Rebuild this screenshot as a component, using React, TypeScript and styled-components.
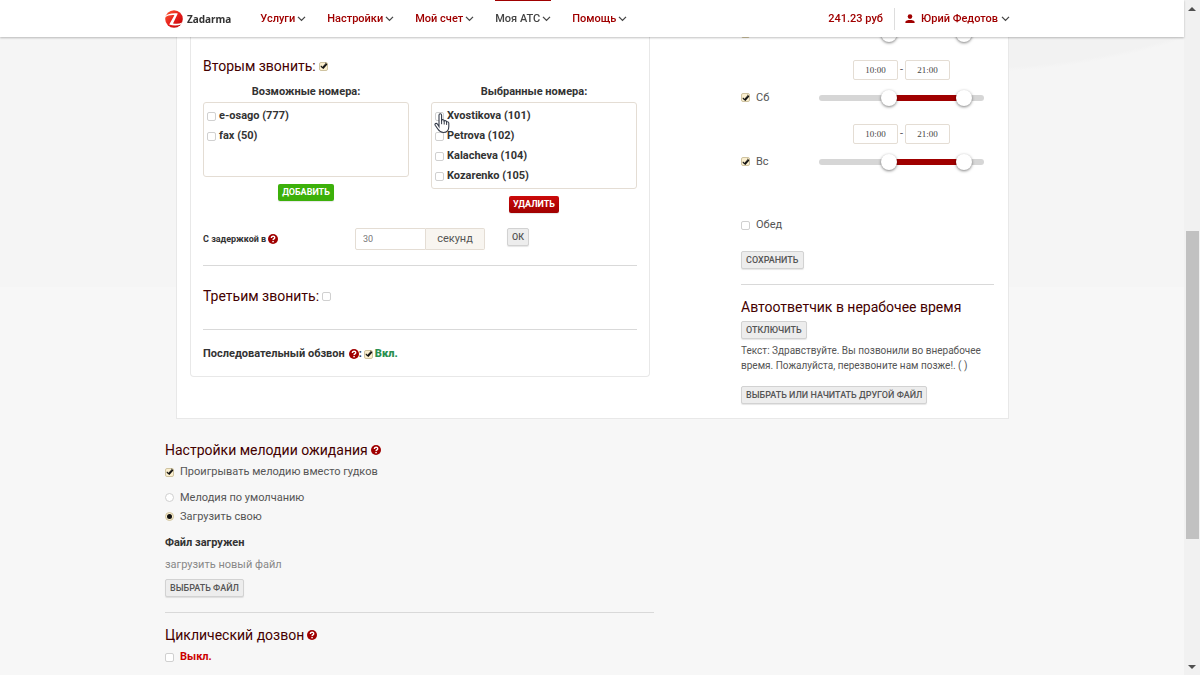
import React from 'react';
import styled, { createGlobalStyle, css } from 'styled-components';

const GlobalStyle = createGlobalStyle`
  *, *::before, *::after { box-sizing: border-box; }
  body {
    margin: 0;
    background: #f7f7f7;
    color: #555;
    font: 11px/20px Roboto, "Liberation Sans", sans-serif;
  }
  button, input { font-family: inherit; }
`;

const red = '#a00000';

const Page = styled.div`
  display: flex;
  align-items: flex-start;
  min-height: 100vh;
`;

const Content = styled.div`
  flex: 1;
  min-width: 0;
  min-height: 100vh;
  background:
    radial-gradient(ellipse 536px 400px at 82% -328px, #f2f2f2 99%, transparent 100%) no-repeat,
    linear-gradient(#f5f5f5, #f5f5f5) no-repeat top / 100% 287px;
`;

const Container = styled.div`
  max-width: 854px;
  margin: 0 auto;
`;

/* ---------- header ---------- */

const Header = styled.header`
  position: fixed;
  z-index: 2;
  top: 0;
  left: 0;
  right: 16px;
  background: #fff;
  box-shadow: 0 1px 2px rgba(0, 0, 0, 0.25);
`;

const HeaderRow = styled(Container)`
  display: flex;
  height: 37px;
  padding-right: 9px;
`;

const Logo = styled.a`
  display: flex;
  align-items: center;
  gap: 4px;
  margin-right: 29px;
  color: #333;
  font: 700 10px/20px "Noto Sans", "Open Sans", sans-serif;
  text-decoration: none;
`;

const Nav = styled.nav`
  display: flex;
  gap: 21px;
  margin-right: auto;
`;

const MenuLink = styled.a<{ $active?: boolean }>`
  display: flex;
  align-items: center;
  gap: 2px;
  border-top: 1px solid ${(p) => (p.$active ? red : 'transparent')};
  color: ${(p) => (p.$active ? '#444' : red)};
  font-size: 11px;
  font-weight: 500;
  text-decoration: none;
  white-space: nowrap;
`;

const Balance = styled(MenuLink)`
  margin-right: 11px;
`;

const HeaderRule = styled.span`
  align-self: center;
  width: 1px;
  height: 22px;
  margin-right: 10px;
  background: #ddd;
`;

const UserName = styled.span`
  margin: 0 1px 0 4px;
`;

/* ---------- shared parts ---------- */

const Title = styled.h2`
  display: flex;
  align-items: center;
  gap: 3px;
  margin: 0;
  color: #400;
  font-size: 14px;
  font-weight: 400;
  line-height: 20px;
`;

const Rule = styled.hr`
  height: 1px;
  margin: 0;
  border: 0;
  background: #d9d9d9;
`;

const boxed = css`
  appearance: none;
  display: grid;
  place-items: center;
  flex: none;
  width: 9px;
  height: 9px;
  margin: 0;
  border: 1px solid #d0d0d0;
  background: #fff;
  &:checked {
    border-color: #cfc3a0;
    background: #fbefcf;
  }
`;

const Check = styled.input.attrs({ type: 'checkbox' })`
  ${boxed}
  border-radius: 2px;
  &:checked::after {
    content: '';
    width: 3px;
    height: 6px;
    margin-top: -2px;
    border: solid #111;
    border-width: 0 1px 1px 0;
    box-shadow: 1px 0 0 #111;
    transform: rotate(42deg);
  }
`;

const Radio = styled.input.attrs({ type: 'radio' })`
  ${boxed}
  border-radius: 50%;
  &:checked::after {
    content: '';
    width: 5px;
    height: 5px;
    border-radius: 50%;
    background: #111;
  }
`;

const Option = styled.label`
  display: flex;
  align-items: center;
  gap: 6px;
`;

const Button = styled.button<{ $tone?: 'green' | 'red' }>`
  display: block;
  height: 18px;
  padding: 0 4px;
  border: 1px solid #d2d2d2;
  border-radius: 2px;
  background: #ededed;
  color: #555;
  font-size: 9px;
  font-weight: 500;
  line-height: 16px;
  text-transform: uppercase;
  box-shadow: 0 1px 1px rgba(0, 0, 0, 0.1);
  ${(p) =>
    p.$tone &&
    css`
      height: 17px;
      padding: 0 3px;
      border-color: transparent;
      background: ${p.$tone === 'green' ? '#3cb00a' : 'linear-gradient(#cc0a0a, #a00000)'} border-box;
      color: #fff;
      font-weight: 700;
      line-height: 15px;
    `}
`;

/* ---------- card ---------- */

const Card = styled.section`
  display: grid;
  grid-template-columns: minmax(0, 460px) minmax(0, 253px);
  justify-content: space-between;
  align-items: start;
  margin: 0 10px 0 11px;
  padding: 0 14px 14px 13px;
  border: 1px solid #e8e8e8;
  border-top: 0;
  background: #fff;
`;

const Panel = styled.div`
  padding: 56px 12px 12px;
  border: 1px solid #e8e8e8;
  border-top: 0;
  border-radius: 0 0 4px 4px;
`;

const Lists = styled.div`
  display: grid;
  grid-template-columns: 1fr 1fr;
  align-items: start;
  gap: 22px;
  margin-top: 6px;
`;

const ListColumn = styled.div`
  display: flex;
  flex-direction: column;
  align-items: center;
  color: #333;
  font-weight: 700;
`;

const ListBox = styled.ul`
  position: relative;
  align-self: stretch;
  min-height: 75px;
  margin: 0 0 7px;
  padding: 3px 3px 2px;
  border: 1px solid #e4ddd4;
  border-radius: 3px;
  list-style: none;
`;

const ListOption = styled(Option)`
  gap: 3px;
`;

const HandCursor = styled.svg`
  position: absolute;
  top: 9px;
  left: 2px;
  width: 16px;
  height: 22px;
`;

const DelayRow = styled.div`
  display: flex;
  align-items: flex-start;
  margin: 15px 0;
`;

const DelayLabel = styled.label`
  display: flex;
  align-items: center;
  gap: 2px;
  width: 152px;
  height: 22px;
  color: #333;
  font-size: 9px;
  font-weight: 700;
`;

const DelayInput = styled.input`
  width: 71px;
  height: 22px;
  padding: 0 7px;
  border: 1px solid #e4ddd4;
  border-radius: 2px 0 0 2px;
  color: #777;
  font-size: 9px;
`;

const Unit = styled.span`
  width: 59px;
  height: 22px;
  margin-right: 22px;
  border: 1px solid #e4ddd4;
  border-left: 0;
  border-radius: 0 2px 2px 0;
  background: #f8f5f0;
  text-align: center;
`;

const ThirdTitle = styled(Title)`
  margin: 20px 0 23px;
`;

const SequenceRow = styled.div`
  display: flex;
  align-items: center;
  margin-top: 14px;
  color: #333;
  font-weight: 700;
`;

const SequenceName = styled.span`
  margin-right: 4px;
`;

const State = styled.strong<{ $on?: boolean }>`
  color: ${(p) => (p.$on ? '#2a9050' : '#cc0000')};
`;

const SequenceOption = styled(Option)`
  gap: 2px;
  margin-left: 2px;
`;

/* ---------- schedule ---------- */

const Schedule = styled.div`
  padding-top: 24px;
`;

const Day = styled.div`
  display: grid;
  grid-template-columns: 78px minmax(0, 165px);
  grid-auto-rows: auto;
  row-gap: 8px;
  margin-bottom: 17px;
`;

const Times = styled.div`
  grid-column: 2;
  display: flex;
  justify-content: center;
  gap: 2px;
`;

const TimeInput = styled.input`
  width: 45px;
  height: 20px;
  padding: 0;
  border: 1px solid #e4ddd4;
  border-radius: 2px;
  color: #444;
  font: 9px "Liberation Serif", serif;
  text-align: center;
`;

const DayOption = styled(Option)`
  height: 19px;
`;

const Track = styled.div`
  position: relative;
  align-self: center;
  height: 6px;
  border-radius: 3px;
  background: linear-gradient(${red}, ${red}) 70px 0 / 75px 6px no-repeat #d6d6d6;
`;

const Range = styled.input.attrs({ type: 'range', min: 0, max: 24 })`
  appearance: none;
  position: absolute;
  top: -5px;
  left: -7px;
  width: calc(100% + 16px);
  height: 16px;
  margin: 0;
  background: none;
  pointer-events: none;
  &::-webkit-slider-thumb {
    appearance: none;
    width: 16px;
    height: 16px;
    border-radius: 50%;
    background: #fff;
    box-shadow: 0 1px 3px rgba(0, 0, 0, 0.5);
    pointer-events: auto;
  }
`;

const Lunch = styled(Option)`
  margin: 44px 0 16px;
`;

const ScheduleRule = styled(Rule)`
  margin: 15px 0 12px;
`;

const AnswerTitle = styled(Title)`
  margin-bottom: 4px;
`;

const AnswerText = styled.p`
  margin: 4px 0 13px;
  font-size: 10px;
  line-height: 15px;
`;

/* ---------- lower settings ---------- */

const Settings = styled.section`
  max-width: 489px;
  padding-top: 21px;
`;

const MelodyOption = styled(Option)`
  margin: 2px 0 6px;
`;

const RadioOption = styled(Option)`
  line-height: 19px;
`;

const Loaded = styled.strong`
  display: block;
  margin-top: 7px;
  color: #333;
`;

const Hint = styled.p`
  margin: 2px 0 4px;
  color: #888;
`;

const SettingsRule = styled(Rule)`
  margin: 15px 0 12px;
`;

const CycleOption = styled(Option)`
  margin-top: 2px;
`;

/* ---------- scroll bar ---------- */

const ScrollBar = styled.div`
  position: sticky;
  top: 0;
  display: grid;
  grid-template-rows: 17px 214fr 308fr 119fr 17px;
  justify-items: center;
  align-items: center;
  width: 16px;
  height: 100vh;
  background: #f1f1f1;
`;

const ScrollThumb = styled.div`
  grid-row: 3;
  width: 13px;
  height: 100%;
  background: #c1c1c1;
`;

const ScrollArrow = styled.svg<{ $row: number }>`
  grid-row: ${(p) => p.$row};
  width: 8px;
  height: 4px;
`;

/* ---------- icons ---------- */

const Chevron = () => (
  <svg width="9" height="6" viewBox="0 0 9 6" aria-hidden="true">
    <path d="M1 0.900 4.500 4.400 8 0.900" fill="none" stroke="#444" strokeWidth="1.300" />
  </svg>
);

const LogoMark = () => (
  <svg width="18" height="18" viewBox="0 0 18 18" aria-hidden="true">
    <defs>
      <linearGradient id="mark" x1="0" y1="0" x2="1" y2="1">
        <stop offset="0" stopColor="#ff5a30" />
        <stop offset="0.55" stopColor="#e31b1b" />
        <stop offset="1" stopColor="#b80000" />
      </linearGradient>
    </defs>
    <circle cx="9" cy="9" r="8.8" fill="url(#mark)" />
    <path d="M0 6.400C1.500 4.400 6 2.800 12.800 3.400L8 13.400C11 14 14 14 17.200 12.600L16 14.600C12 16 7.500 15.600 4.200 14.600L9.400 5.200C6 4.800 3 5.400 0 7.600Z" fill="#fff" />
  </svg>
);

const UserIcon = () => (
  <svg width="10" height="10" viewBox="0 0 10 10" fill={red} aria-hidden="true">
    <circle cx="5" cy="2.6" r="2.3" />
    <path d="M0.4 9V8C0.4 6.6 3 6 5 6s4.600 0.600 4.600 2v1Z" />
  </svg>
);

const Help = () => (
  <svg width="10" height="10" viewBox="0 0 10 10" role="img" aria-label="Справка">
    <circle cx="5" cy="5" r="5" fill={red} />
    <path d="M3.300 4C3.300 1.600 6.700 1.700 6.700 3.700 6.700 4.900 5.100 4.800 5.100 6.100" fill="none" stroke="#fff" strokeWidth="1.400" />
    <rect x="4.300" y="6.900" width="1.500" height="1.400" fill="#fff" />
  </svg>
);

const menu = ['Услуги', 'Настройки', 'Мой счет', 'Моя АТС', 'Помощь'];
const available = ['e-osago (777)', 'fax (50)'];
const chosen = ['Xvostikova (101)', 'Petrova (102)', 'Kalacheva (104)', 'Kozarenko (105)'];

const Numbers = ({ items, children }: { items: string[]; children?: React.ReactNode }) => (
  <ListBox>
    {items.map((name) => (
      <li key={name}>
        <ListOption>
          <Check />
          {name}
        </ListOption>
      </li>
    ))}
    {children}
  </ListBox>
);

const DayHours = ({ name, label, times = true }: { name?: string; label: string; times?: boolean }) => (
  <Day>
    {times && (
      <Times>
        <TimeInput defaultValue="10:00" aria-label={`${label}, начало`} />-
        <TimeInput defaultValue="21:00" aria-label={`${label}, конец`} />
      </Times>
    )}
    <DayOption>
      <Check defaultChecked aria-label={label} />
      {name}
    </DayOption>
    <Track>
      <Range defaultValue={10} aria-label={`${label}, с`} />
      <Range defaultValue={21} aria-label={`${label}, до`} />
    </Track>
  </Day>
);

export default function App() {
  return (
    <Page>
      <GlobalStyle />
      <Content>
        <Header>
          <HeaderRow>
            <Logo href="#">
              <LogoMark />
              Zadarma
            </Logo>
            <Nav>
              {menu.map((item) => (
                <MenuLink key={item} href="#" $active={item === 'Моя АТС'}>
                  {item}
                  <Chevron />
                </MenuLink>
              ))}
            </Nav>
            <Balance href="#">241.23 руб</Balance>
            <HeaderRule />
            <MenuLink href="#">
              <UserIcon />
              <UserName>Юрий Федотов</UserName>
              <Chevron />
            </MenuLink>
          </HeaderRow>
        </Header>

        <Container as="main">
          <Card>
            <Panel>
              <Title as="label">
                Вторым звонить:
                <Check defaultChecked />
              </Title>
              <Lists>
                <ListColumn>
                  Возможные номера:
                  <Numbers items={available} />
                  <Button $tone="green">Добавить</Button>
                </ListColumn>
                <ListColumn>
                  Выбранные номера:
                  <Numbers items={chosen}>
                    <HandCursor viewBox="0 0 16 22" aria-hidden="true">
                      <path
                        d="M5 14.500V3.200C5 1.300 7.600 1.300 7.600 3.200V8.200C8.200 7.200 10.100 7.600 10.200 8.900 11 8.300 12.500 8.600 12.600 9.900 13.500 9.400 14.800 9.900 14.800 11.200V14.500C14.800 18.500 12.800 20.500 9.500 20.500 6.200 20.500 5 18.800 3.800 17L1.200 13.200C0.300 11.600 2.300 10.700 3.400 12Z"
                        fill="#fff"
                        stroke="#333a48"
                        strokeWidth="1.100"
                      />
                      <path d="M7.600 8v4.200M10.200 8.900v3.600M12.600 9.900v3" fill="none" stroke="#333a48" />
                    </HandCursor>
                  </Numbers>
                  <Button $tone="red">Удалить</Button>
                </ListColumn>
              </Lists>
              <DelayRow>
                <DelayLabel htmlFor="delay">
                  С задержкой в
                  <Help />
                </DelayLabel>
                <DelayInput id="delay" defaultValue="30" />
                <Unit>секунд</Unit>
                <Button>ОК</Button>
              </DelayRow>
              <Rule />
              <ThirdTitle as="label">
                Третьим звонить:
                <Check />
              </ThirdTitle>
              <Rule />
              <SequenceRow>
                <SequenceName>Последовательный обзвон</SequenceName>
                <Help />:
                <SequenceOption>
                  <Check defaultChecked />
                  <State $on>Вкл.</State>
                </SequenceOption>
              </SequenceRow>
            </Panel>

            <Schedule>
              <DayHours label="Пятница" times={false} />
              <DayHours name="Сб" label="Суббота" />
              <DayHours name="Вс" label="Воскресенье" />
              <Lunch>
                <Check />
                Обед
              </Lunch>
              <Button>Сохранить</Button>
              <ScheduleRule />
              <AnswerTitle>Автоответчик в нерабочее время</AnswerTitle>
              <Button>Отключить</Button>
              <AnswerText>
                Текст: Здравствуйте. Вы позвонили во внерабочее время. Пожалуйста, перезвоните нам позже!. ( )
              </AnswerText>
              <Button>Выбрать или начитать другой файл</Button>
            </Schedule>
          </Card>

          <Settings>
            <Title>
              Настройки мелодии ожидания
              <Help />
            </Title>
            <MelodyOption>
              <Check defaultChecked />
              Проигрывать мелодию вместо гудков
            </MelodyOption>
            <RadioOption>
              <Radio name="melody" />
              Мелодия по умолчанию
            </RadioOption>
            <RadioOption>
              <Radio name="melody" defaultChecked />
              Загрузить свою
            </RadioOption>
            <Loaded>Файл загружен</Loaded>
            <Hint>загрузить новый файл</Hint>
            <Button>Выбрать файл</Button>
            <SettingsRule />
            <Title>
              Циклический дозвон
              <Help />
            </Title>
            <CycleOption>
              <Check />
              <State>Выкл.</State>
            </CycleOption>
          </Settings>
        </Container>
      </Content>
      <ScrollBar aria-hidden="true">
        <ScrollArrow $row={1} viewBox="0 0 8 4">
          <path d="M0 4 4 0 8 4Z" fill="#505050" />
        </ScrollArrow>
        <ScrollThumb />
        <ScrollArrow $row={5} viewBox="0 0 8 4">
          <path d="M0 0 4 4 8 0Z" fill="#505050" />
        </ScrollArrow>
      </ScrollBar>
    </Page>
  );
}
